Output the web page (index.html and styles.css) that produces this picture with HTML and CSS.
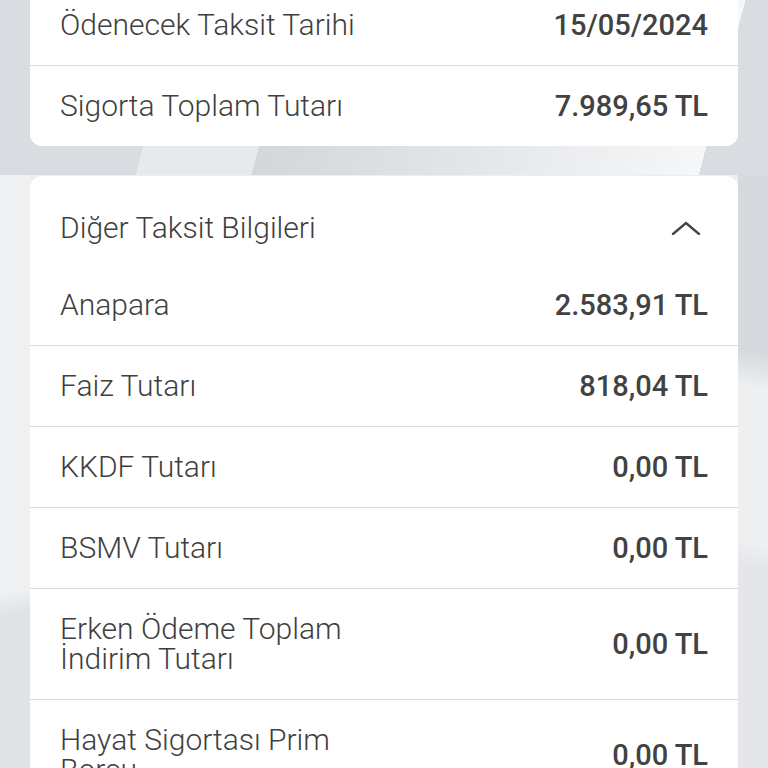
FILE: index.html
```html
<!DOCTYPE html>
<html lang="tr">
<head>
<meta charset="utf-8">
<title>Taksit Bilgileri</title>
<link rel="stylesheet" href="styles.css">
</head>
<body>
<div class="screen">
  <section class="card card-top">
    <div class="row"><span class="label">Ödenecek Taksit Tarihi</span><span class="value">15/05/2024</span></div>
    <div class="row"><span class="label">Sigorta Toplam Tutarı</span><span class="value">7.989,65 TL</span></div>
  </section>
  <section class="card">
    <div class="card-head">
      <span class="label">Diğer Taksit Bilgileri</span>
      <svg class="chevron" width="30" height="14" viewBox="0 0 30 14" aria-hidden="true"><polyline points="2,13 15,2 28,13" fill="none" stroke="#454545" stroke-width="2.3" stroke-linecap="round" stroke-linejoin="round"/></svg>
    </div>
    <div class="row first"><span class="label">Anapara</span><span class="value">2.583,91 TL</span></div>
    <div class="row"><span class="label">Faiz Tutarı</span><span class="value">818,04 TL</span></div>
    <div class="row"><span class="label">KKDF Tutarı</span><span class="value">0,00 TL</span></div>
    <div class="row"><span class="label">BSMV Tutarı</span><span class="value">0,00 TL</span></div>
    <div class="row tall"><span class="label wrap">Erken Ödeme Toplam İndirim Tutarı</span><span class="value">0,00 TL</span></div>
    <div class="row tall"><span class="label wrap">Hayat Sigortası Prim Borcu</span><span class="value">0,00 TL</span></div>
  </section>
</div>
</body>
</html>
```
FILE: styles.css
```css
html, body {
  margin: 0;
  padding: 0;
}
body {
  width: 768px;
  height: 768px;
  overflow: hidden;
  font-family: Roboto, "Noto Sans", sans-serif;
  background-color: #eceef0;
  background-image:
    linear-gradient(105deg, #d9dce0 0 22.4%, #e7eaed 22.4% 36.6%, #d3d6da 36.6%, #eef0f2 80%, #f6f7f8 91.5%, #d9dce0 91.5%),
    linear-gradient(170deg, #eef0f2 0 70%, #e0e3e6 74%),
    linear-gradient(190deg, #d6d9dd 0 30%, #edeff1 36% 62%, #e4e6e9 66%);
  background-size: 768px 175px, 30px 593px, 30px 593px;
  background-position: 0 0, 0 175px, 738px 175px;
  background-repeat: no-repeat;
}
.screen {
  display: flex;
  flex-direction: column;
  gap: 30px;
  padding: 0 30px;
  margin-top: -15px;
}
.card {
  background: #ffffff;
  border-radius: 12px;
  display: flex;
  flex-direction: column;
}
.row {
  display: flex;
  justify-content: space-between;
  align-items: center;
  gap: 20px;
  height: 80px;
  padding: 0 30px 0 30px;
  border-top: 1px solid #dcdcdc;
  line-height: 30px;
}
.row:first-child,
.row.first {
  border-top: none;
}
.row.tall {
  height: 110px;
}
.label {
  font-size: 30px;
  font-weight: 300;
  color: #3f3f3f;
}
.label.wrap {
  max-width: 330px;
}
.value {
  font-size: 29px;
  font-weight: 500;
  color: #424242;
  white-space: nowrap;
}
.card-head {
  display: flex;
  justify-content: space-between;
  align-items: center;
  height: 89px;
  box-sizing: border-box;
  padding: 37px 37px 22px 30px;
  line-height: 30px;
}
.chevron {
  display: block;
}
```
